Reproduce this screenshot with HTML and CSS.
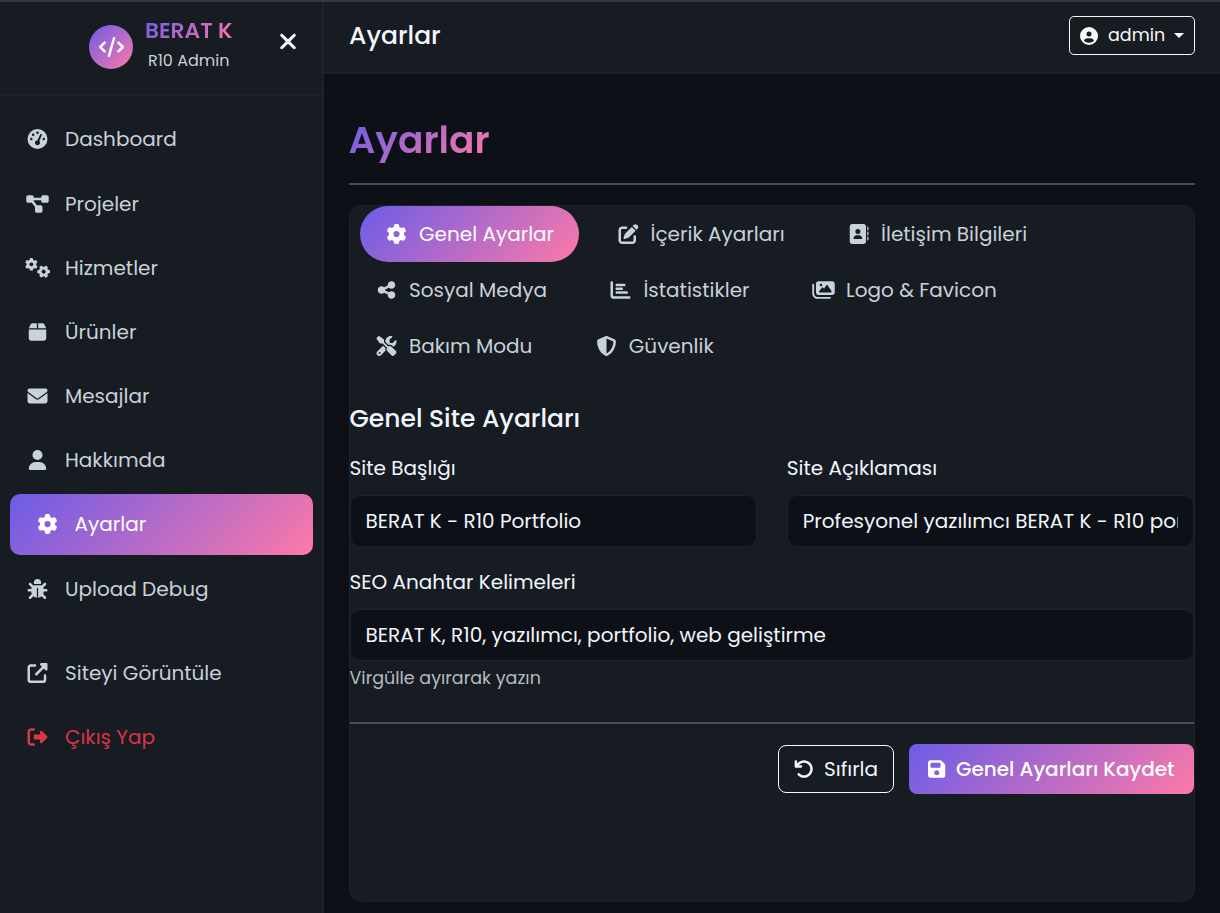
FILE: index.html
```html
<!DOCTYPE html>
<html lang="tr">
<head>
  <meta charset="UTF-8">
  <meta name="viewport" content="width=device-width, initial-scale=1.0">
  <title>Ayarlar - R10 Admin</title>
  <link rel="stylesheet" href="styles.css">
</head>
<body>
  <!-- Icon sprite -->
  <svg class="sprite" aria-hidden="true">
    <symbol id="code" viewBox="0 0 640 512"><path d="M392.8 1.2c-17-4.9-34.7 5-39.6 22l-128 448c-4.9 17 5 34.7 22 39.6s34.7-5 39.6-22l128-448c4.9-17-5-34.7-22-39.6zm80.6 120.1c-12.5 12.5-12.5 32.8 0 45.3L562.7 256l-89.4 89.4c-12.5 12.5-12.5 32.8 0 45.3s32.8 12.5 45.3 0l112-112c12.5-12.5 12.5-32.8 0-45.3l-112-112c-12.5-12.5-32.8-12.5-45.3 0zm-306.7 0c-12.5-12.5-32.8-12.5-45.3 0l-112 112c-12.5 12.5-12.5 32.8 0 45.3l112 112c12.5 12.5 32.8 12.5 45.3 0s12.5-32.8 0-45.3L77.3 256l89.4-89.4c12.5-12.5 12.5-32.8 0-45.3z"/></symbol>
    <symbol id="times" viewBox="0 0 384 512"><path d="M342.6 150.6c12.5-12.5 12.5-32.8 0-45.3s-32.8-12.5-45.3 0L192 210.7 86.6 105.4c-12.5-12.5-32.8-12.5-45.3 0s-12.5 32.8 0 45.3L146.7 256 41.4 361.4c-12.5 12.5-12.5 32.8 0 45.3s32.8 12.5 45.3 0L192 301.3 297.4 406.6c12.5 12.5 32.8 12.5 45.3 0s12.5-32.8 0-45.3L237.3 256 342.6 150.6z"/></symbol>
    <symbol id="gauge" viewBox="0 0 512 512"><path d="M0 256a256 256 0 1 1 512 0A256 256 0 1 1 0 256zM288 96a32 32 0 1 0 -64 0 32 32 0 1 0 64 0zM256 416c35.3 0 64-28.7 64-64c0-17.4-6.9-33.1-18.1-44.6L366 161.7c5.3-12.1-.2-26.3-12.3-31.6s-26.3 .2-31.6 12.3L257.9 288c-.6 0-1.3 0-1.9 0c-35.3 0-64 28.7-64 64s28.7 64 64 64zM176 144a32 32 0 1 0 -64 0 32 32 0 1 0 64 0zM96 288a32 32 0 1 0 0-64 32 32 0 1 0 0 64zm352-32a32 32 0 1 0 -64 0 32 32 0 1 0 64 0z"/></symbol>
    <symbol id="diagram" viewBox="0 0 576 512"><path d="M0 80C0 53.5 21.5 32 48 32h96c26.5 0 48 21.5 48 48V96H384V80c0-26.5 21.5-48 48-48h96c26.5 0 48 21.5 48 48v96c0 26.5-21.5 48-48 48H432c-26.5 0-48-21.5-48-48V160H192v16c0 1.7-.1 3.4-.3 5L272 288h96c26.5 0 48 21.5 48 48v96c0 26.5-21.5 48-48 48H272c-26.5 0-48-21.5-48-48V336c0-1.7 .1-3.4 .3-5L144 224H48c-26.5 0-48-21.5-48-48V80z"/></symbol>
    <symbol id="gear" viewBox="0 0 512 512"><path d="M495.9 166.6c3.2 8.7 .5 18.4-6.4 24.6l-43.3 39.4c1.1 8.3 1.7 16.8 1.7 25.4s-.6 17.1-1.7 25.4l43.3 39.4c6.9 6.2 9.6 15.9 6.4 24.6c-4.4 11.9-9.7 23.3-15.8 34.3l-4.7 8.1c-6.6 11-14 21.4-22.1 31.2c-5.9 7.2-15.7 9.6-24.5 6.8l-55.7-17.7c-13.4 10.3-28.2 18.9-44 25.4l-12.5 57.1c-2 9.1-9 16.3-18.2 17.8c-13.8 2.3-28 3.5-42.5 3.5s-28.7-1.2-42.5-3.5c-9.2-1.5-16.2-8.7-18.2-17.8l-12.5-57.1c-15.8-6.5-30.6-15.1-44-25.4L83.1 425.9c-8.8 2.8-18.6 .3-24.5-6.8c-8.1-9.8-15.5-20.2-22.1-31.2l-4.7-8.1c-6.1-11-11.4-22.4-15.8-34.3c-3.2-8.7-.5-18.4 6.4-24.6l43.3-39.4C64.6 273.1 64 264.6 64 256s.6-17.1 1.7-25.4L22.4 191.2c-6.9-6.2-9.6-15.9-6.4-24.6c4.4-11.9 9.7-23.3 15.8-34.3l4.7-8.1c6.6-11 14-21.4 22.1-31.2c5.9-7.2 15.7-9.6 24.5-6.8l55.7 17.7c13.4-10.3 28.2-18.9 44-25.4l12.5-57.1c2-9.1 9-16.3 18.2-17.8C227.3 1.2 241.5 0 256 0s28.7 1.2 42.5 3.5c9.2 1.5 16.2 8.7 18.2 17.8l12.5 57.1c15.8 6.5 30.6 15.1 44 25.4l55.7-17.7c8.8-2.8 18.6-.3 24.5 6.8c8.1 9.8 15.5 20.2 22.1 31.2l4.7 8.1c6.1 11 11.4 22.4 15.8 34.3zM256 336a80 80 0 1 0 0-160 80 80 0 1 0 0 160z"/></symbol>
    <symbol id="gears" viewBox="0 0 640 512"><use href="#gear" x="0" y="0" width="326" height="326"/><use href="#gear" x="-163" y="-163" width="326" height="326" transform="translate(477 349) rotate(30)"/></symbol>
    <symbol id="box" viewBox="0 0 448 512"><path d="M50.7 58.5L0 160H208V32H93.7C75.5 32 58.9 42.3 50.7 58.5zM240 160H448L397.3 58.5C389.1 42.3 372.5 32 354.3 32H240V160zm208 32H0V416c0 35.3 28.7 64 64 64H384c35.3 0 64-28.7 64-64V192z"/></symbol>
    <symbol id="envelope" viewBox="0 0 512 512"><path d="M48 64C21.5 64 0 85.5 0 112c0 15.1 7.1 29.3 19.2 38.4L236.8 313.6c11.4 8.5 27 8.5 38.4 0L492.8 150.4c12.1-9.1 19.2-23.3 19.2-38.4c0-26.5-21.5-48-48-48H48zM0 176V384c0 35.3 28.7 64 64 64H448c35.3 0 64-28.7 64-64V176L294.4 339.2c-22.8 17.1-54 17.1-76.8 0L0 176z"/></symbol>
    <symbol id="user" viewBox="0 0 448 512"><path d="M224 256A128 128 0 1 0 224 0a128 128 0 1 0 0 256zm-45.7 48C79.8 304 0 383.8 0 482.3C0 498.7 13.3 512 29.7 512H418.3c16.4 0 29.7-13.3 29.7-29.7C448 383.8 368.2 304 269.7 304H178.3z"/></symbol>
    <symbol id="bug" viewBox="0 0 512 512"><path d="M256 0c53 0 96 43 96 96v3.6c0 15.7-12.7 28.4-28.4 28.4H188.4c-15.7 0-28.4-12.7-28.4-28.4V96c0-53 43-96 96-96zM41.4 105.4c12.5-12.5 32.8-12.5 45.3 0l64 64c.7 .7 1.3 1.4 1.9 2.1c14.2-7.3 30.4-11.4 47.5-11.4H312c17.1 0 33.2 4.1 47.5 11.4c.6-.7 1.2-1.4 1.9-2.1l64-64c12.5-12.5 32.8-12.5 45.3 0s12.5 32.8 0 45.3l-64 64c-.7 .7-1.4 1.3-2.1 1.9c6.2 12 10.1 25.3 11.1 39.5H480c17.7 0 32 14.3 32 32s-14.3 32-32 32H416c0 24.6-5.5 47.8-15.4 68.6c2.2 1.3 4.2 2.9 6 4.8l64 64c12.5 12.5 12.5 32.8 0 45.3s-32.8 12.5-45.3 0l-63.1-63.1c-24.5 21.8-55.8 36.2-90.3 39.6V240c0-8.8-7.2-16-16-16s-16 7.2-16 16V479.2c-34.5-3.4-65.8-17.8-90.3-39.6L86.6 502.6c-12.5 12.5-32.8 12.5-45.3 0s-12.5-32.8 0-45.3l64-64c1.9-1.9 3.9-3.4 6-4.8C101.5 367.8 96 344.6 96 320H32c-17.7 0-32-14.3-32-32s14.3-32 32-32H96.3c1.1-14.1 5-27.5 11.1-39.5c-.7-.6-1.4-1.2-2.1-1.9l-64-64c-12.5-12.5-12.5-32.8 0-45.3z"/></symbol>
    <symbol id="external" viewBox="0 0 512 512"><path d="M352 0c-12.9 0-24.6 7.8-29.6 19.8s-2.2 25.7 6.9 34.9L370.7 96 201.4 265.4c-12.5 12.5-12.5 32.8 0 45.3s32.8 12.5 45.3 0L416 141.3l41.4 41.4c9.2 9.2 22.9 11.9 34.9 6.9s19.8-16.6 19.8-29.6V32c0-17.7-14.3-32-32-32H352zM80 32C35.8 32 0 67.8 0 112V432c0 44.2 35.8 80 80 80H400c44.2 0 80-35.8 80-80V320c0-17.7-14.3-32-32-32s-32 14.3-32 32V432c0 8.8-7.2 16-16 16H80c-8.8 0-16-7.2-16-16V112c0-8.8 7.2-16 16-16H192c17.7 0 32-14.3 32-32s-14.3-32-32-32H80z"/></symbol>
    <symbol id="logout" viewBox="0 0 512 512"><path d="M377.9 105.9L500.7 228.7c7.2 7.2 11.3 17.1 11.3 27.3s-4.1 20.1-11.3 27.3L377.9 406.1c-6.4 6.4-15 9.9-24 9.9c-18.7 0-33.9-15.2-33.9-33.9l0-62.1-128 0c-17.7 0-32-14.3-32-32l0-64c0-17.7 14.3-32 32-32l128 0 0-62.1c0-18.7 15.2-33.9 33.9-33.9c9 0 17.6 3.6 24 9.9zM160 96L96 96c-17.7 0-32 14.3-32 32l0 256c0 17.7 14.3 32 32 32l64 0c17.7 0 32 14.3 32 32s-14.3 32-32 32l-64 0c-53 0-96-43-96-96L0 128C0 75 43 32 96 32l64 0c17.7 0 32 14.3 32 32s-14.3 32-32 32z"/></symbol>
    <symbol id="edit" viewBox="0 0 512 512"><path d="M471.6 21.7c-21.9-21.9-57.3-21.9-79.2 0L362.3 51.7l97.9 97.9 30.1-30.1c21.9-21.9 21.9-57.3 0-79.2L471.6 21.7zm-299.2 220c-6.1 6.1-10.8 13.6-13.5 21.9l-29.6 88.8c-2.9 8.6-.6 18.1 5.8 24.6s15.9 8.7 24.6 5.8l88.8-29.6c8.2-2.7 15.7-7.4 21.9-13.5L437.7 172.3 339.7 74.3 172.4 241.7zM96 64C43 64 0 107 0 160V416c0 53 43 96 96 96H352c53 0 96-43 96-96V320c0-17.7-14.3-32-32-32s-32 14.3-32 32v96c0 17.7-14.3 32-32 32H96c-17.7 0-32-14.3-32-32V160c0-17.7 14.3-32 32-32h96c17.7 0 32-14.3 32-32s-14.3-32-32-32H96z"/></symbol>
    <symbol id="address" viewBox="0 0 512 512"><path d="M96 0C60.7 0 32 28.7 32 64V448c0 35.3 28.7 64 64 64H384c35.3 0 64-28.7 64-64V64c0-35.3-28.7-64-64-64H96zM208 288h64c44.2 0 80 35.8 80 80c0 8.8-7.2 16-16 16H144c-8.8 0-16-7.2-16-16c0-44.2 35.8-80 80-80zm-32-96a64 64 0 1 1 128 0 64 64 0 1 1 -128 0zM512 80c0-8.8-7.2-16-16-16s-16 7.2-16 16v64c0 8.8 7.2 16 16 16s16-7.2 16-16V80zM496 192c-8.8 0-16 7.2-16 16v64c0 8.8 7.2 16 16 16s16-7.2 16-16V208c0-8.8-7.2-16-16-16zm16 144c0-8.8-7.2-16-16-16s-16 7.2-16 16v64c0 8.8 7.2 16 16 16s16-7.2 16-16V336z"/></symbol>
    <symbol id="share" viewBox="0 0 448 512"><path d="M352 224c53 0 96-43 96-96s-43-96-96-96s-96 43-96 96c0 4 .2 8 .7 11.9l-94.1 47C145.4 170.2 121.9 160 96 160c-53 0-96 43-96 96s43 96 96 96c25.9 0 49.4-10.2 66.6-26.9l94.1 47c-.5 3.9-.7 7.8-.7 11.9c0 53 43 96 96 96s96-43 96-96s-43-96-96-96c-25.9 0-49.4 10.2-66.6 26.9l-94.1-47c.5-3.9 .7-7.8 .7-11.9s-.2-8-.7-11.9l94.1-47C302.6 213.8 326.1 224 352 224z"/></symbol>
    <symbol id="chart" viewBox="0 0 512 512"><path d="M32 32c17.7 0 32 14.3 32 32V400c0 8.8 7.2 16 16 16H480c17.7 0 32 14.3 32 32s-14.3 32-32 32H80c-44.2 0-80-35.8-80-80V64C0 46.3 14.3 32 32 32zm96 96c0-17.7 14.3-32 32-32l192 0c17.7 0 32 14.3 32 32s-14.3 32-32 32H160c-17.7 0-32-14.3-32-32zm32 64H288c17.7 0 32 14.3 32 32s-14.3 32-32 32H160c-17.7 0-32-14.3-32-32s14.3-32 32-32zm0 96H416c17.7 0 32 14.3 32 32s-14.3 32-32 32H160c-17.7 0-32-14.3-32-32s14.3-32 32-32z"/></symbol>
    <symbol id="images" viewBox="0 0 576 512"><path d="M160 32c-35.3 0-64 28.7-64 64V320c0 35.3 28.7 64 64 64H512c35.3 0 64-28.7 64-64V96c0-35.3-28.7-64-64-64H160zM396 138.7l96 144c4.9 7.4 5.4 16.8 1.2 24.6S480.9 320 472 320H328 280 200c-9.2 0-17.6-5.3-21.6-13.6s-2.9-18.2 2.9-25.4l64-80c4.6-5.7 11.4-9 18.7-9s14.2 3.3 18.7 9l17.3 21.6 56-84C360.5 132 368 128 376 128s15.5 4 20 10.7zM192 128a32 32 0 1 1 64 0 32 32 0 1 1 -64 0zM48 120c0-13.3-10.7-24-24-24S0 106.7 0 120V344c0 75.1 60.9 136 136 136H456c13.3 0 24-10.7 24-24s-10.7-24-24-24H136c-48.6 0-88-39.4-88-88V120z"/></symbol>
    <symbol id="tools" viewBox="0 0 512 512"><path d="M78.6 5C69.1-2.4 55.6-1.5 47 7L7 47c-8.5 8.5-9.4 22-2.1 31.6l80 104c4.5 5.9 11.6 9.4 19 9.4h54.1l109 109c-14.7 29-10 65.4 14.3 89.6l112 112c12.5 12.5 32.8 12.5 45.3 0l64-64c12.5-12.5 12.5-32.8 0-45.3l-112-112c-24.2-24.2-60.6-29-89.6-14.3l-109-109V104c0-7.5-3.5-14.5-9.4-19L78.6 5zM19.9 396.1C7.2 408.8 0 426.1 0 444.1C0 481.6 30.4 512 67.9 512c18 0 35.3-7.2 48-19.9L233.7 374.3c-7.8-20.9-9-43.6-3.6-65.1l-61.7-61.7L19.9 396.1zM512 144c0-10.5-1.1-20.7-3.2-30.5c-2.4-11.2-16.1-14.1-24.2-6l-63.9 63.9c-3 3-7.1 4.7-11.3 4.7H352c-8.8 0-16-7.2-16-16V102.6c0-4.2 1.7-8.3 4.7-11.3l63.9-63.9c8.1-8.1 5.2-21.8-6-24.2C388.7 1.1 378.5 0 368 0C288.5 0 224 64.5 224 144l0 .8 85.3 85.3c36-9.1 75.8 .5 104 28.7L429 274.5c49-23 83-72.8 83-130.5zM56 432a24 24 0 1 1 48 0 24 24 0 1 1 -48 0z"/></symbol>
    <symbol id="shield" viewBox="0 0 512 512"><path d="M256 0c4.6 0 9.2 1 13.4 2.9L457.7 82.8c22 9.3 38.4 31 38.3 57.2c-.5 99.2-41.3 280.7-213.6 363.2c-16.7 8-36.1 8-52.8 0C57.3 420.7 16.5 239.2 16 140c-.1-26.2 16.3-47.9 38.3-57.2L242.7 2.9C246.8 1 251.4 0 256 0zm0 66.8V444.8C394 378 431.1 230.1 432 141.4L256 66.8l0 0z"/></symbol>
    <symbol id="circle-user" viewBox="0 0 512 512"><path d="M399 384.2C376.9 345.8 335.4 320 288 320H224c-47.4 0-88.9 25.8-111 64.2c35.2 39.2 86.2 63.8 143 63.8s107.8-24.7 143-63.8zM0 256a256 256 0 1 1 512 0A256 256 0 1 1 0 256zm256 16a72 72 0 1 0 0-144 72 72 0 1 0 0 144z"/></symbol>
    <symbol id="undo" viewBox="0 0 512 512"><path d="M125.7 160H176c17.7 0 32 14.3 32 32s-14.3 32-32 32H48c-17.7 0-32-14.3-32-32V64c0-17.7 14.3-32 32-32s32 14.3 32 32v51.2L97.6 97.6c87.5-87.5 229.3-87.5 316.8 0s87.5 229.3 0 316.8s-229.3 87.5-316.8 0c-12.5-12.5-12.5-32.8 0-45.3s32.8-12.5 45.3 0c62.5 62.5 163.8 62.5 226.3 0s62.5-163.8 0-226.3s-163.8-62.5-226.3 0L125.7 160z"/></symbol>
    <symbol id="save" viewBox="0 0 448 512"><path d="M64 32C28.7 32 0 60.7 0 96V416c0 35.3 28.7 64 64 64H384c35.3 0 64-28.7 64-64V173.3c0-17-6.7-33.3-18.7-45.3L352 50.7C340 38.7 323.7 32 306.7 32H64zm0 96c0-17.7 14.3-32 32-32H288c17.7 0 32 14.3 32 32v64c0 17.7-14.3 32-32 32H96c-17.7 0-32-14.3-32-32V128zM224 288a64 64 0 1 1 0 128 64 64 0 1 1 0-128z"/></symbol>
  </svg>

  <div class="layout">
    <aside class="sidebar">
      <div class="sidebar-header">
        <div class="logo"><svg><use href="#code"/></svg></div>
        <div class="brand">
          <div class="brand-name">BERAT K</div>
          <div class="brand-sub">R10 Admin</div>
        </div>
        <button class="close"><svg><use href="#times"/></svg></button>
      </div>
      <nav class="menu">
        <a class="menu-link" href="#"><svg class="icon"><use href="#gauge"/></svg><span>Dashboard</span></a>
        <a class="menu-link" href="#"><svg class="icon"><use href="#diagram"/></svg><span>Projeler</span></a>
        <a class="menu-link" href="#"><svg class="icon"><use href="#gears"/></svg><span>Hizmetler</span></a>
        <a class="menu-link" href="#"><svg class="icon"><use href="#box"/></svg><span>Ürünler</span></a>
        <a class="menu-link" href="#"><svg class="icon"><use href="#envelope"/></svg><span>Mesajlar</span></a>
        <a class="menu-link" href="#"><svg class="icon"><use href="#user"/></svg><span>Hakkımda</span></a>
        <a class="menu-link active" href="#"><svg class="icon"><use href="#gear"/></svg><span>Ayarlar</span></a>
        <a class="menu-link" href="#"><svg class="icon"><use href="#bug"/></svg><span>Upload Debug</span></a>
        <a class="menu-link spaced" href="#"><svg class="icon"><use href="#external"/></svg><span>Siteyi Görüntüle</span></a>
        <a class="menu-link danger" href="#"><svg class="icon"><use href="#logout"/></svg><span>Çıkış Yap</span></a>
      </nav>
    </aside>

    <main class="main">
      <header class="topbar">
        <h5 class="topbar-title">Ayarlar</h5>
        <button class="user-btn"><svg class="icon"><use href="#circle-user"/></svg><span>admin</span><i class="caret"></i></button>
      </header>

      <div class="content">
        <h1 class="page-title">Ayarlar</h1>
        <hr class="line">

        <section class="card">
          <div class="tabs">
            <a class="tab active" href="#"><svg class="icon"><use href="#gear"/></svg><span>Genel Ayarlar</span></a>
            <a class="tab" href="#"><svg class="icon"><use href="#edit"/></svg><span>İçerik Ayarları</span></a>
            <a class="tab" href="#"><svg class="icon"><use href="#address"/></svg><span>İletişim Bilgileri</span></a>
            <a class="tab" href="#"><svg class="icon"><use href="#share"/></svg><span>Sosyal Medya</span></a>
            <a class="tab" href="#"><svg class="icon"><use href="#chart"/></svg><span>İstatistikler</span></a>
            <a class="tab" href="#"><svg class="icon"><use href="#images"/></svg><span>Logo &amp; Favicon</span></a>
            <a class="tab" href="#"><svg class="icon"><use href="#tools"/></svg><span>Bakım Modu</span></a>
            <a class="tab" href="#"><svg class="icon"><use href="#shield"/></svg><span>Güvenlik</span></a>
          </div>

          <form class="form">
            <h5 class="form-title">Genel Site Ayarları</h5>
            <div class="row">
              <div class="field">
                <label for="title">Site Başlığı</label>
                <input id="title" type="text" value="BERAT K - R10 Portfolio">
              </div>
              <div class="field">
                <label for="desc">Site Açıklaması</label>
                <input id="desc" type="text" value="Profesyonel yazılımcı BERAT K - R10 portfolio">
              </div>
            </div>
            <div class="field">
              <label for="keywords">SEO Anahtar Kelimeleri</label>
              <input id="keywords" type="text" value="BERAT K, R10, yazılımcı, portfolio, web geliştirme">
              <small class="help">Virgülle ayırarak yazın</small>
            </div>
            <hr class="line form-line">
            <div class="actions">
              <button type="reset" class="btn btn-outline"><svg class="icon"><use href="#undo"/></svg><span>Sıfırla</span></button>
              <button type="button" class="btn btn-primary"><svg class="icon"><use href="#save"/></svg><span>Genel Ayarları Kaydet</span></button>
            </div>
          </form>
        </section>
      </div>
    </main>
  </div>
</body>
</html>
```
FILE: styles.css
```css
:root {
  --primary: #6c5ce7;
  --accent: #fd79a8;
  --gradient: linear-gradient(135deg, var(--primary), var(--accent));
  --bg: #0d1017;
  --panel: #171b22;
  --border: #1f2329;
  --text: #f0f6fc;
  --muted: #c9d1d9;
}
* {
  box-sizing: border-box;
}
body {
  margin: 0;
  height: 100vh;
  overflow: hidden;
  border-top: 2px solid #38383d;
  background: var(--bg);
  color: var(--text);
  font-family: Poppins, Inter, sans-serif;
  font-size: 20px;
  line-height: 1.5;
}
a {
  color: inherit;
  text-decoration: none;
}
button, input {
  font: inherit;
  color: inherit;
}
svg {
  fill: currentColor;
  display: block;
}
.sprite {
  display: none;
}
.icon {
  height: 20px;
  width: 25px;
  flex: none;
}
.layout {
  display: flex;
  height: 100%;
}

/* Sidebar */
.sidebar {
  width: 324px;
  flex: none;
  background: var(--panel);
  border-right: 2px solid var(--border);
}
.sidebar-header {
  display: flex;
  height: 94px;
  padding: 12px 24px 0 89px;
  border-bottom: 2px solid #1e2229;
}
.logo {
  width: 44px;
  height: 44px;
  margin-top: 11px;
  border-radius: 50%;
  background: var(--gradient);
  color: #fff;
  display: flex;
  align-items: center;
  justify-content: center;
}
.logo svg {
  width: 25px;
  height: 20px;
}
.brand {
  margin-left: 12px;
  text-align: center;
}
.brand-name {
  font-size: 21.8px;
  font-weight: 600;
  line-height: 34px;
  background: var(--gradient);
  -webkit-background-clip: text;
  background-clip: text;
  color: transparent;
}
.brand-sub {
  font-size: 16px;
  line-height: 25px;
  color: var(--muted);
}
.close {
  margin-left: auto;
  width: 20px;
  height: 25px;
  margin-top: 15px;
  padding: 0;
  border: 0;
  background: none;
}
.close svg {
  width: 20px;
  height: 25px;
}
.menu {
  display: flex;
  flex-direction: column;
  gap: 2.5px;
  padding-top: 12.5px;
}
.menu-link {
  height: 61.7px;
  display: flex;
  align-items: center;
  gap: 15px;
  padding-left: 25px;
  color: var(--muted);
}
.menu-link.active {
  margin: 0 9.5px 0 10px;
  padding-left: 24.5px;
  border-radius: 10px;
  background: var(--gradient);
  color: #fff;
}
.menu-link.spaced {
  margin-top: 20px;
}
.menu-link.danger {
  color: #dc3545;
}

/* Main */
.main {
  flex: 1;
  min-width: 0;
}
.topbar {
  height: 72px;
  padding: 0 25px 3px;
  display: flex;
  align-items: center;
  justify-content: space-between;
  background: var(--panel);
  border-bottom: 2px solid #1e2229;
}
.topbar-title, .form-title {
  margin: 0;
  font-size: 25px;
  font-weight: 500;
  line-height: 31px;
}
.user-btn {
  width: 126px;
  height: 39px;
  padding: 0 10px;
  display: flex;
  align-items: center;
  border: 1.5px solid #f8f9fa;
  border-radius: 5px;
  background: none;
  color: #f8f9fa;
  font-size: 17.5px;
}
.user-btn .icon {
  width: 18px;
  height: 18px;
  margin-right: 10px;
}
.caret {
  margin-left: auto;
  border-top: 5.5px solid;
  border-left: 5.5px solid transparent;
  border-right: 5.5px solid transparent;
}
.content {
  padding: 43px 25px 0 24.5px;
}
.page-title {
  margin: 0;
  width: fit-content;
  font-size: 37.5px;
  font-weight: 600;
  line-height: 46px;
  background: var(--gradient);
  -webkit-background-clip: text;
  background-clip: text;
  color: transparent;
}
.line {
  height: 2px;
  margin: 20px 0;
  border: 0;
  background: #484b52;
}
.card {
  height: 697px;
  border: 1.5px solid var(--border);
  border-radius: 13px;
  background: var(--panel);
}

/* Tabs */
.tabs {
  display: flex;
  flex-wrap: wrap;
  padding-right: 100px;
}
.tab {
  height: 56px;
  display: flex;
  align-items: center;
  gap: 10px;
  padding: 0 37px 0 24.5px;
  color: var(--muted);
}
.tab.active {
  margin: 0 12px 0 10px;
  padding-right: 25px;
  border-radius: 28px;
  background: var(--gradient);
  color: #fff;
}

/* Form */
.form {
  padding-top: 29px;
}
.row {
  display: grid;
  grid-template-columns: 1fr 1fr;
  gap: 30px;
  margin: 19px 0 20px;
}
.field label {
  display: block;
  line-height: 31px;
  margin-bottom: 11px;
}
.field input {
  display: block;
  width: 100%;
  height: 52px;
  padding: 0 15px 1px;
  border: 1.5px solid var(--border);
  border-radius: 10px;
  background: var(--bg);
}
.help {
  display: block;
  margin-top: 4px;
  font-size: 17.5px;
  line-height: 26px;
  color: #b5bbc3;
}
.form-line {
  margin: 31px 0 20px;
}
.actions {
  display: flex;
  justify-content: flex-end;
  align-items: center;
  gap: 15px;
}
.btn {
  display: flex;
  align-items: center;
  justify-content: center;
  gap: 10px;
  padding: 0;
  border: 0;
  border-radius: 8px;
}
.btn-outline {
  width: 116px;
  height: 48px;
  border: 1.5px solid #f8f9fa;
  background: none;
}
.btn-primary {
  width: 285px;
  height: 50px;
  background: var(--gradient);
  color: #fff;
  font-weight: 500;
}
.btn .icon {
  width: 20px;
}
.btn-primary .icon {
  width: 17.5px;
}
```
